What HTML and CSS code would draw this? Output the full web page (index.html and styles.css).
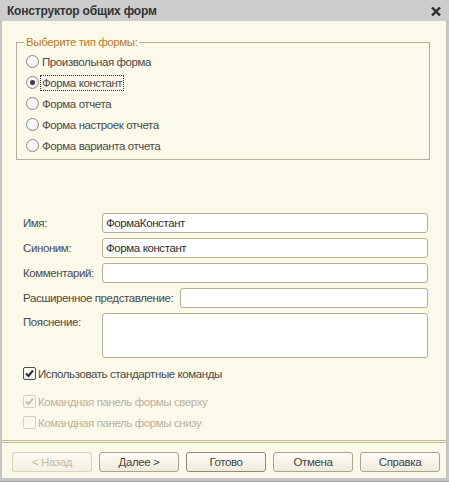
FILE: index.html
```html
<!DOCTYPE html>
<html lang="ru">
<head>
<meta charset="utf-8">
<title>Конструктор общих форм</title>
<link rel="stylesheet" href="styles.css">
</head>
<body>
<div class="window">
  <div class="titlebar">
    <span class="title">Конструктор общих форм</span>
    <svg class="close" width="10" height="9" viewBox="0 0 10 9"><path d="M1 0.5 L9 8.5 M9 0.5 L1 8.5" stroke="#2e2e2e" stroke-width="2.4" fill="none"/></svg>
  </div>
  <div class="client">
    <fieldset class="group">
      <legend>Выберите тип формы:</legend>
      <div class="radio"><span class="rb"></span><span class="rt">Произвольная форма</span></div>
      <div class="radio"><span class="rb on"></span><span class="rt focus">Форма констант</span></div>
      <div class="radio"><span class="rb"></span><span class="rt">Форма отчета</span></div>
      <div class="radio"><span class="rb"></span><span class="rt">Форма настроек отчета</span></div>
      <div class="radio"><span class="rb"></span><span class="rt">Форма варианта отчета</span></div>
    </fieldset>

    <div class="fields">
      <div class="row"><span class="lbl">Имя:</span><div class="input">ФормаКонстант</div></div>
      <div class="row"><span class="lbl">Синоним:</span><div class="input">Форма констант</div></div>
      <div class="row"><span class="lbl">Комментарий:</span><div class="input"></div></div>
      <div class="row"><span class="lbl wide">Расширенное представление:</span><div class="input"></div></div>
      <div class="row tall"><span class="lbl">Пояснение:</span><div class="input area"></div></div>
    </div>

    <div class="check">
      <span class="cb on"><svg width="11" height="11" viewBox="0 0 11 11"><path d="M2 5.5 L4.5 8 L9 2.5" stroke="#2f2f2f" stroke-width="2" fill="none"/></svg></span>
      <span class="ct">Использовать стандартные команды</span>
    </div>
    <div class="checks-off">
      <div class="check disabled">
        <span class="cb"><svg width="11" height="11" viewBox="0 0 11 11"><path d="M2 5.5 L4.5 8 L9 2.5" stroke="#c4c0b2" stroke-width="2" fill="none"/></svg></span>
        <span class="ct">Командная панель формы сверху</span>
      </div>
      <div class="check disabled">
        <span class="cb"></span>
        <span class="ct">Командная панель формы снизу</span>
      </div>
    </div>

    <div class="sep"></div>

    <div class="buttons">
      <div class="btn disabled">&lt; Назад</div>
      <div class="btn">Далее &gt;</div>
      <div class="btn default">Готово</div>
      <div class="btn">Отмена</div>
      <div class="btn">Справка</div>
    </div>
  </div>
</div>
</body>
</html>
```

FILE: styles.css
```css
html, body {
  margin: 0;
  padding: 0;
}
body {
  font-family: "Liberation Sans", Arial, sans-serif;
  font-size: 11.5px;
  letter-spacing: -0.4px;
  color: #4a4a4a;
  background: #c9c9c9;
}
.window {
  width: 449px;
  height: 482px;
  display: flex;
  flex-direction: column;
  background: #c6c6c6;
  box-shadow: inset 0 -1px 0 #9d9d9d;
}
.titlebar {
  height: 21px;
  flex: none;
  display: flex;
  align-items: center;
  justify-content: space-between;
  padding: 0 8px 0 7px;
  background: #cdcdcd;
}
.title {
  font-weight: bold;
  font-size: 12px;
  color: #333333;
  letter-spacing: -0.2px;
  padding-top: 1px;
}
.close {
  display: block;
  margin-top: 1px;
}
.client {
  flex: 1;
  margin: 0 3px 4px 2px;
  background: #fbf9ea;
  padding: 14px 16px 0 14px;
  display: flex;
  flex-direction: column;
}
.group {
  margin: 0;
  padding: 2px 8px 3px 9px;
  border: 1px solid #b4b097;
  min-width: 0;
}
.group legend {
  color: #c07a2a;
  padding: 0 2px;
  margin-left: -2px;
  line-height: 14px;
}
.radio {
  height: 21px;
  display: flex;
  align-items: center;
}
.rb {
  width: 11px;
  height: 11px;
  border: 1px solid #8a8a8a;
  border-radius: 50%;
  background: radial-gradient(circle at 40% 35%, #ffffff 0%, #f3f3f3 60%, #dedede 100%);
  position: relative;
  flex: none;
  margin-right: 1px;
}
.rb.on::after {
  content: "";
  position: absolute;
  left: 3px;
  top: 3px;
  width: 5px;
  height: 5px;
  border-radius: 50%;
  background: #3d3d3d;
}
.rt {
  padding: 1px 1px;
  border: 1px dotted transparent;
}
.rt.focus {
  border-color: #333;
}
.fields {
  margin: 53px 2px 0 7px;
  display: flex;
  flex-direction: column;
  gap: 5px;
}
.row {
  display: flex;
  align-items: center;
  height: 20px;
}
.row.tall {
  height: 45px;
  align-items: flex-start;
}
.row.tall .lbl {
  padding-top: 3px;
}
.lbl {
  width: 79px;
  flex: none;
  white-space: nowrap;
}
.lbl.wide {
  width: 157px;
}
.input {
  flex: 1;
  height: 20px;
  box-sizing: border-box;
  border: 1px solid #b4ae93;
  border-radius: 3px;
  background: #ffffff;
  padding: 0 3px;
  line-height: 18px;
  color: #2e2e2e;
}
.input.area {
  height: 45px;
}
.check {
  display: flex;
  align-items: center;
  height: 21px;
  margin: 5px 0 0 7px;
}
.checks-off {
  margin-top: 7px;
}
.checks-off .check {
  margin-top: 0;
}
.cb {
  width: 11px;
  height: 11px;
  border: 1px solid #4e4e4e;
  border-radius: 2px;
  background: linear-gradient(#ffffff, #f0f0f0);
  display: flex;
  align-items: center;
  justify-content: center;
  flex: none;
  margin-right: 2px;
}
.cb svg {
  display: block;
}
.check.disabled .cb {
  border-color: #d6d1bf;
  background: #fbf9ee;
}
.check.disabled .ct {
  color: #b8b3a1;
}
.sep {
  margin: 7px -16px 0 -14px;
  height: 1px;
  border-top: 1px solid #c8ba8f;
  border-bottom: 1px solid #c8ba8f;
  background: #fffdf4;
}
.buttons {
  display: flex;
  gap: 7px;
  margin: 9px -10px 0 -4px;
}
.btn {
  flex: none;
  width: 80px;
  height: 20px;
  box-sizing: border-box;
  border: 1px solid #a9a48f;
  border-radius: 3px;
  background: linear-gradient(#fdfcf7, #efebdb);
  text-align: center;
  line-height: 18px;
  color: #454545;
}
.btn.default {
  border-color: #8f8a76;
}
.btn.disabled {
  border-color: #dad4be;
  background: linear-gradient(#fcfaf1, #f4f0e2);
  color: #c3bda8;
}
```
